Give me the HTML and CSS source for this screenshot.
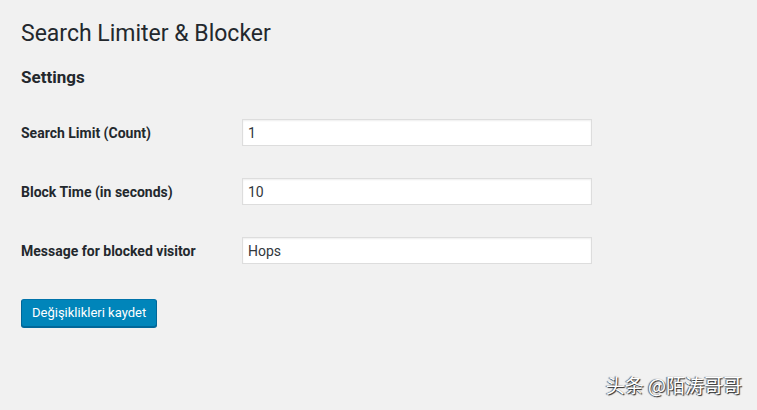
FILE: index.html
```html
<!DOCTYPE html>
<html lang="tr">
<head>
    <meta charset="UTF-8">
    <meta name="viewport" content="width=device-width, initial-scale=1.0">
    <title>Search Limiter &amp; Blocker</title>
    <link rel="stylesheet" href="styles.css">
</head>
<body>
    <div class="wrap">
        <h1>Search Limiter &amp; Blocker</h1>
        <h2>Settings</h2>

        <form class="settings-form">
            <div class="form-row">
                <label for="limit">Search Limit (Count)</label>
                <input type="text" id="limit" class="regular-text" value="1">
            </div>
            <div class="form-row">
                <label for="block_time">Block Time (in seconds)</label>
                <input type="text" id="block_time" class="regular-text" value="10">
            </div>
            <div class="form-row">
                <label for="message">Message for blocked visitor</label>
                <input type="text" id="message" class="regular-text" value="Hops">
            </div>
            <div class="submit">
                <button type="submit" class="button-primary">Değişiklikleri kaydet</button>
            </div>
        </form>
    </div>

    <div class="watermark">头条 @陌涛哥哥</div>
</body>
</html>
```

FILE: styles.css
```css
html, body {
    height: 100%;
}
body {
    margin: 0;
    background-color: #f1f1f1;
    color: #23282d;
    font-family: Roboto, "Noto Sans", sans-serif;
    font-size: 13px;
}
.wrap {
    padding: 19px 20px 0 21px;
}
h1 {
    margin: 0;
    font-size: 23px;
    font-weight: 400;
    line-height: 29px;
}
h2 {
    margin: 18px 0 0 0;
    font-size: 17px;
    font-weight: 700;
    line-height: 22px;
}
.settings-form {
    margin-top: 15px;
}
.form-row {
    display: flex;
    align-items: center;
    height: 59px;
}
.form-row label {
    width: 221px;
    font-size: 14px;
    font-weight: 700;
    color: #23282d;
}
.regular-text {
    box-sizing: border-box;
    width: 350px;
    height: 27px;
    margin: 0;
    padding: 0 5px;
    border: 1px solid #ddd;
    background-color: #fff;
    box-shadow: inset 0 1px 2px rgba(0, 0, 0, 0.07);
    color: #32373c;
    font-family: Roboto, "Noto Sans", sans-serif;
    font-size: 14px;
    outline: none;
}
.submit {
    padding-top: 19px;
}
.button-primary {
    height: 28px;
    padding: 0 10px 1px 10px;
    border: 1px solid #0073aa;
    border-color: #0073aa #006799 #006799;
    border-radius: 3px;
    background-color: #0085ba;
    box-shadow: 0 1px 0 #006799;
    color: #fff;
    font-family: Roboto, "Noto Sans", sans-serif;
    font-size: 13px;
    cursor: pointer;
}
.watermark {
    position: absolute;
    right: 15px;
    bottom: 12px;
    color: #fff;
    font-family: "Noto Sans CJK SC", sans-serif;
    font-size: 19px;
    text-shadow: 1px 1px 1px #222, -1px 0 1px #555;
}
```
